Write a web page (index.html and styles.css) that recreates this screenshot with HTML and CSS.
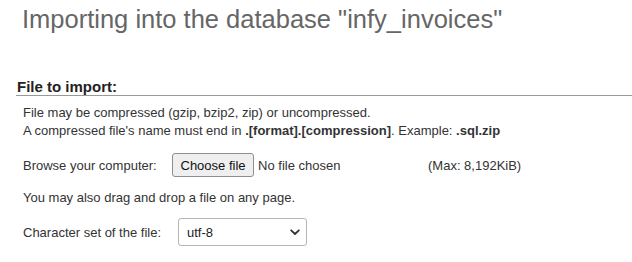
FILE: index.html
```html
<!DOCTYPE html>
<html>
<head>
<meta charset="utf-8">
<link rel="stylesheet" href="styles.css">
</head>
<body>
<h2 class="title">Importing into the database "infy_invoices"</h2>
<section class="panel">
  <div class="legend">File to import:</div>
  <div class="body">
    <p class="note">File may be compressed (gzip, bzip2, zip) or uncompressed.<br>A compressed file's name must end in <b>.[format].[compression]</b>. Example: <b>.sql.zip</b></p>
    <div class="row browse">
      <span class="label">Browse your computer:</span>
      <span class="file"><button class="btn" type="button">Choose file</button><span class="nofile">No file chosen</span></span>
      <span class="max">(Max: 8,192KiB)</span>
    </div>
    <p class="drag">You may also drag and drop a file on any page.</p>
    <div class="row">
      <span class="label">Character set of the file:</span>
      <span class="select"><span>utf-8</span><svg width="10" height="7" viewBox="0 0 10 7"><path d="M1.2 1.3 L5 5 L8.8 1.3" fill="none" stroke="#333" stroke-width="1.8" stroke-linecap="round" stroke-linejoin="round"/></svg></span>
    </div>
  </div>
</section>
</body>
</html>
```
FILE: styles.css
```css
html, body {
  margin: 0;
  padding: 0;
  background: #fff;
}
body {
  font-family: "Liberation Sans", Arial, sans-serif;
  color: #333;
  font-size: 13px;
  width: 632px;
  height: 262px;
  overflow: hidden;
}
.title {
  margin: 0;
  padding: 4px 0 0 22px;
  font-size: 25.5px;
  font-weight: normal;
  color: #666;
  line-height: 30px;
}
.panel {
  margin: 44px 0 0 16px;
}
.legend {
  font-weight: bold;
  font-size: 15px;
  color: #222;
  padding: 0 0 0 1px;
  line-height: 17px;
  border-bottom: 1px solid #999;
}
.body {
  padding: 8px 0 0 7px;
}
.note {
  margin: 0;
  line-height: 18px;
}
.row {
  display: flex;
  align-items: center;
}
.browse {
  margin-top: 13px;
}
.label {
  width: 155px;
}
.browse .label {
  width: 149px;
}
.file {
  display: flex;
  align-items: center;
  width: 256px;
}
.btn {
  font-family: "Liberation Sans", Arial, sans-serif;
  font-size: 13px;
  color: #111;
  height: 24px;
  padding: 0 7.5px;
  border: 1px solid #8e8e8e;
  border-radius: 3px;
  background: #efefef;
  margin-right: 4px;
}
.max {
  color: #333;
}
.drag {
  margin: 13px 0 13px;
}
.select {
  box-sizing: border-box;
  width: 129px;
  height: 28px;
  border: 1px solid #b5b5b5;
  border-radius: 3px;
  display: flex;
  align-items: center;
  justify-content: space-between;
  padding: 0 6px 0 8px;
  color: #222;
}
```
